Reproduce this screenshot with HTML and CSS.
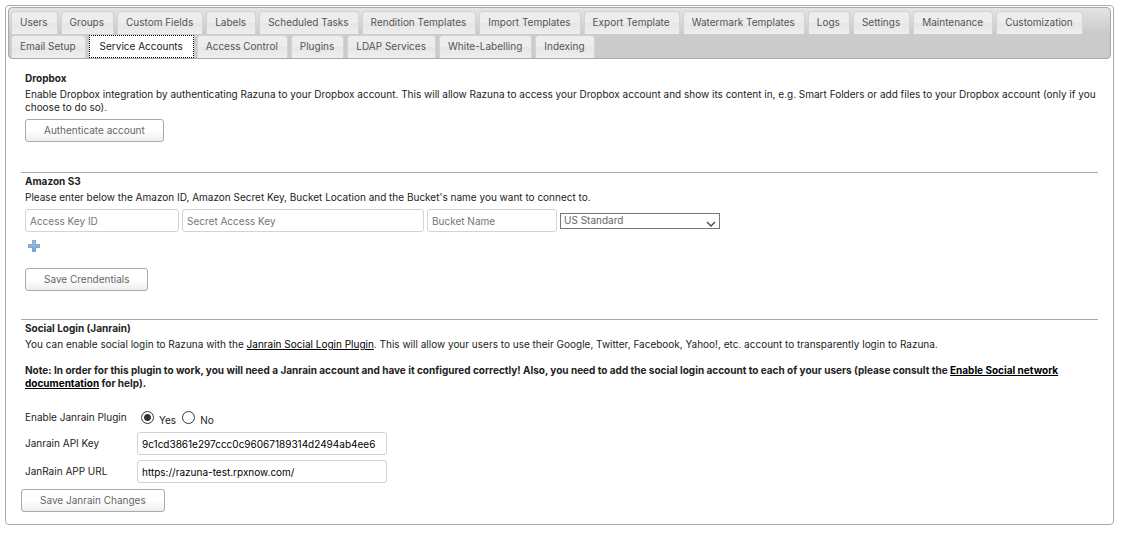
FILE: index.html
```html
<!DOCTYPE html>
<html lang="en">
<head>
<meta charset="utf-8">
<title>Service Accounts</title>
<link rel="stylesheet" href="styles.css">
</head>
<body>
<main class="panel">
  <nav class="tabs">
    <a class="tab" href="#">Users</a>
    <a class="tab" href="#">Groups</a>
    <a class="tab" href="#">Custom Fields</a>
    <a class="tab" href="#">Labels</a>
    <a class="tab" href="#">Scheduled Tasks</a>
    <a class="tab" href="#">Rendition Templates</a>
    <a class="tab" href="#">Import Templates</a>
    <a class="tab" href="#">Export Template</a>
    <a class="tab" href="#">Watermark Templates</a>
    <a class="tab" href="#">Logs</a>
    <a class="tab" href="#">Settings</a>
    <a class="tab" href="#">Maintenance</a>
    <a class="tab" href="#">Customization</a>
    <a class="tab" href="#">Email Setup</a>
    <a class="tab tab-active" href="#" aria-current="page">Service Accounts</a>
    <a class="tab" href="#">Access Control</a>
    <a class="tab" href="#">Plugins</a>
    <a class="tab" href="#">LDAP Services</a>
    <a class="tab" href="#">White-Labelling</a>
    <a class="tab" href="#">Indexing</a>
  </nav>
  <div class="content">
    <section class="section">
      <h2 class="heading">Dropbox</h2>
      <p class="text">Enable Dropbox integration by authenticating Razuna to your Dropbox account. This will allow Razuna to access your Dropbox account and show its content in, e.g. Smart Folders or add files to your Dropbox account (only if you choose to do so).</p>
      <button class="button" type="button">Authenticate account</button>
    </section>
    <section class="section">
      <h2 class="heading">Amazon S3</h2>
      <p class="text">Please enter below the Amazon ID, Amazon Secret Key, Bucket Location and the Bucket's name you want to connect to.</p>
      <div class="fields">
        <input class="input key-id" type="text" placeholder="Access Key ID" aria-label="Access Key ID">
        <input class="input secret" type="text" placeholder="Secret Access Key" aria-label="Secret Access Key">
        <input class="input bucket" type="text" placeholder="Bucket Name" aria-label="Bucket Name">
        <div class="select-wrap">
          <select class="select" aria-label="Bucket location"><option>US Standard</option></select>
          <svg class="chevron" width="10" height="6" viewBox="0 0 10 6" aria-hidden="true"><path d="M1 1l4 4 4-4" fill="none" stroke="#444" stroke-width="1.3"/></svg>
        </div>
      </div>
      <button class="add" type="button" aria-label="Add bucket">
        <svg width="14" height="14" viewBox="0 0 14 14" aria-hidden="true"><defs><linearGradient id="plus" x2="0" y2="1"><stop offset="0" stop-color="#a9c8ec"/><stop offset="1" stop-color="#6d9bd2"/></linearGradient></defs><path d="M5.5 1.5h3v4h4v3h-4v4h-3v-4h-4v-3h4z" fill="url(#plus)" stroke="#7fa3cd"/></svg>
      </button>
      <button class="button" type="button">Save Crendentials</button>
    </section>
    <section class="section">
      <h2 class="heading">Social Login (Janrain)</h2>
      <p class="text">You can enable social login to Razuna with the <a class="link" href="#">Janrain Social Login Plugin</a>. This will allow your users to use their Google, Twitter, Facebook, Yahoo!, etc. account to transparently login to Razuna.</p>
      <p class="text note">Note: In order for this plugin to work, you will need a Janrain account and have it configured correctly! Also, you need to add the social login account to each of your users (please consult the <a class="link" href="#">Enable Social network documentation</a> for help).</p>
      <form class="form">
        <span id="enable">Enable Janrain Plugin</span>
        <div class="radios" role="radiogroup" aria-labelledby="enable">
          <input class="radio" type="radio" name="janrain" id="yes" checked><label class="radio-label" for="yes">Yes</label>
          <input class="radio" type="radio" name="janrain" id="no"><label class="radio-label" for="no">No</label>
        </div>
        <label for="api">Janrain API Key</label>
        <input class="input" id="api" type="text" value="9c1cd3861e297ccc0c96067189314d2494ab4ee6">
        <label for="url">JanRain APP URL</label>
        <input class="input" id="url" type="text" value="https://razuna-test.rpxnow.com/">
      </form>
    </section>
    <button class="button" type="button">Save Janrain Changes</button>
  </div>
</main>
</body>
</html>
```

FILE: styles.css
```css
* { box-sizing: border-box; }
body {
  margin: 5px 7px 8px 5px;
  background: #fff;
  color: #222;
  font: 10px/13px Inter, Arial, sans-serif;
}
.panel {
  padding: 1px 2px 12px;
  border: 1px solid #aaa;
  border-radius: 4px;
}
.tabs {
  display: flex;
  flex-wrap: wrap;
  gap: 1px 3px;
  padding: 3px 2px 0;
  border: 1px solid #aaa;
  border-radius: 4px;
  background: linear-gradient(#e4e4e4, #cbcbcb 50%, #cbcbcb);
}
.tab {
  height: 23px;
  padding: 4px 9px 4px 8px;
  border: 1px solid #d3d3d3;
  border-bottom: 0;
  border-radius: 4px 4px 0 0;
  background: linear-gradient(#ededed 50%, #e5e5e5 50%, #eee);
  color: #555;
  text-decoration: none;
}
.tab-active {
  padding: 4px 10px;
  border: 1px dotted #000;
  border-radius: 0;
  background: #fff;
  color: #212121;
}
.content { padding: 0 13px; }
.section {
  padding: 1px 0 28px 4px;
  border-bottom: 1px solid #aaa;
}
.section:first-child {
  padding-top: 12px;
  padding-bottom: 30px;
}
.section:last-of-type {
  padding-bottom: 6px;
  border-bottom: 0;
}
.heading {
  margin: 0 0 3px;
  font-size: 10px;
  line-height: 14px;
}
.text { margin: 0 0 5px; }
.note {
  margin: 13px 0 18px;
  font-weight: bold;
}
.link { color: #000; }
.button {
  display: block;
  height: 23px;
  padding: 0 18px;
  border: 1px solid #aaa;
  border-radius: 3px;
  background: linear-gradient(#fff 50%, #eee);
  color: #666;
  font: inherit;
}
.fields {
  display: flex;
  align-items: center;
  gap: 3px;
}
.input {
  height: 23px;
  padding: 0 4px;
  border: 1px solid #d3d3d3;
  border-radius: 3px;
  background: #fff;
  color: #000;
  font: inherit;
}
.input::placeholder { color: #757575; }
.key-id { width: 154px; }
.secret { width: 242px; }
.bucket { width: 130px; }
.select-wrap {
  position: relative;
  width: 160px;
}
.select {
  display: block;
  width: 100%;
  height: 16px;
  padding: 0 3px;
  border: 1px solid #777;
  border-radius: 0;
  appearance: none;
  background: #fff;
  color: #666;
  font: inherit;
}
.chevron {
  position: absolute;
  right: 4px;
  bottom: 2px;
}
.add {
  display: block;
  height: 14px;
  margin: 7px 0 15px 2px;
  padding: 0;
  border: 0;
  background: none;
}
.add svg { display: block; }
.form {
  display: grid;
  grid-template-columns: 112px 250px;
  row-gap: 5px;
  align-items: center;
}
.radios {
  display: flex;
  align-items: center;
  height: 19px;
  padding-left: 4px;
}
.radio {
  width: 13px;
  height: 13px;
  margin: 0 5px 0 0;
  border: 1px solid #333;
  border-radius: 50%;
  appearance: none;
}
.radio:checked { background: radial-gradient(circle, #333 3px, #fff 4px); }
.radio-label {
  padding-top: 5px;
  margin-right: 6px;
}
```
